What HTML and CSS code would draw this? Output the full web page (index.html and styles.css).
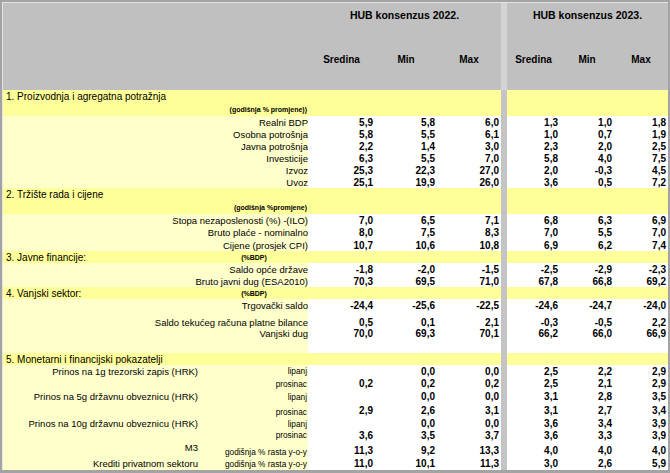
FILE: index.html
```html
<!DOCTYPE html>
<html lang="hr">
<head>
<meta charset="utf-8">
<title>HUB konsenzus</title>
<link rel="stylesheet" href="styles.css">
</head>
<body>
<div class="frame">
<div class="inner">
<table class="sheet">
<colgroup>
<col class="cA"><col class="cB"><col class="c1"><col class="c2"><col class="c3"><col class="cS"><col class="d1"><col class="d2"><col class="d3">
</colgroup>
<tr class="h24">
  <td class="hd" colspan="2"></td>
  <td class="hd htitle" colspan="3">HUB konsenzus 2022.</td>
  <td class="sepH"></td>
  <td class="hd htitle" colspan="3">HUB konsenzus 2023.</td>
</tr>
<tr class="h63">
  <td class="hd" colspan="2"></td>
  <td class="hd hcol">Sredina</td><td class="hd hcol">Min</td><td class="hd hcol">Max</td>
  <td class="sepH"></td>
  <td class="hd hcol">Sredina</td><td class="hd hcol">Min</td><td class="hd hcol">Max</td>
</tr>

<!-- 1 -->
<tr class="h13">
  <td class="sec title" colspan="2">1. Proizvodnja i agregatna potražnja</td>
  <td class="sec"></td><td class="sec"></td><td class="sec"></td><td class="sep"></td><td class="sec"></td><td class="sec"></td><td class="sec"></td>
</tr>
<tr class="h13">
  <td class="sec"></td><td class="sec sm right">(godišnja % promjene))</td>
  <td class="sec"></td><td class="sec"></td><td class="sec"></td><td class="sep"></td><td class="sec"></td><td class="sec"></td><td class="sec"></td>
</tr>
<tr class="h12"><td class="lab" colspan="2">Realni BDP</td><td class="num">5,9</td><td class="num">5,8</td><td class="num">6,0</td><td class="sep"></td><td class="num">1,3</td><td class="num">1,0</td><td class="num">1,8</td></tr>
<tr class="h12"><td class="lab" colspan="2">Osobna potrošnja</td><td class="num">5,8</td><td class="num">5,5</td><td class="num">6,1</td><td class="sep"></td><td class="num">1,0</td><td class="num">0,7</td><td class="num">1,9</td></tr>
<tr class="h12"><td class="lab" colspan="2">Javna potrošnja</td><td class="num">2,2</td><td class="num">1,4</td><td class="num">3,0</td><td class="sep"></td><td class="num">2,3</td><td class="num">2,0</td><td class="num">2,5</td></tr>
<tr class="h12"><td class="lab" colspan="2">Investicije</td><td class="num">6,3</td><td class="num">5,5</td><td class="num">7,0</td><td class="sep"></td><td class="num">5,8</td><td class="num">4,0</td><td class="num">7,5</td></tr>
<tr class="h12"><td class="lab" colspan="2">Izvoz</td><td class="num">25,3</td><td class="num">22,3</td><td class="num">27,0</td><td class="sep"></td><td class="num">2,0</td><td class="num">-0,3</td><td class="num">4,5</td></tr>
<tr class="h12"><td class="lab" colspan="2">Uvoz</td><td class="num">25,1</td><td class="num">19,9</td><td class="num">26,0</td><td class="sep"></td><td class="num">3,6</td><td class="num">0,5</td><td class="num">7,2</td></tr>

<!-- 2 -->
<tr class="h13">
  <td class="sec title" colspan="2">2. Tržište rada i cijene</td>
  <td class="sec"></td><td class="sec"></td><td class="sec"></td><td class="sep"></td><td class="sec"></td><td class="sec"></td><td class="sec"></td>
</tr>
<tr class="h13">
  <td class="sec"></td><td class="sec sm right">(godišnja %promjene)</td>
  <td class="sec"></td><td class="sec"></td><td class="sec"></td><td class="sep"></td><td class="sec"></td><td class="sec"></td><td class="sec"></td>
</tr>
<tr class="h12"><td class="lab" colspan="2">Stopa nezaposlenosti (%) -(ILO)</td><td class="num">7,0</td><td class="num">6,5</td><td class="num">7,1</td><td class="sep"></td><td class="num">6,8</td><td class="num">6,3</td><td class="num">6,9</td></tr>
<tr class="h13"><td class="lab" colspan="2">Bruto plaće - nominalno</td><td class="num">8,0</td><td class="num">7,5</td><td class="num">8,3</td><td class="sep"></td><td class="num">7,0</td><td class="num">5,5</td><td class="num">7,0</td></tr>
<tr class="h12"><td class="lab" colspan="2">Cijene (prosjek CPI)</td><td class="num">10,7</td><td class="num">10,6</td><td class="num">10,8</td><td class="sep"></td><td class="num">6,9</td><td class="num">6,2</td><td class="num">7,4</td></tr>

<!-- 3 -->
<tr class="h12">
  <td class="sec title">3. Javne financije:</td><td class="sec sm center">(%BDP)</td>
  <td class="sec"></td><td class="sec"></td><td class="sec"></td><td class="sep"></td><td class="sec"></td><td class="sec"></td><td class="sec"></td>
</tr>
<tr class="h12"><td class="lab" colspan="2">Saldo opće države</td><td class="num">-1,8</td><td class="num">-2,0</td><td class="num">-1,5</td><td class="sep"></td><td class="num">-2,5</td><td class="num">-2,9</td><td class="num">-2,3</td></tr>
<tr class="h12"><td class="lab" colspan="2">Bruto javni dug (ESA2010)</td><td class="num">70,3</td><td class="num">69,5</td><td class="num">71,0</td><td class="sep"></td><td class="num">67,8</td><td class="num">66,8</td><td class="num">69,2</td></tr>

<!-- 4 -->
<tr class="h12">
  <td class="sec title">4. Vanjski sektor:</td><td class="sec sm center">(%BDP)</td>
  <td class="sec"></td><td class="sec"></td><td class="sec"></td><td class="sep"></td><td class="sec"></td><td class="sec"></td><td class="sec"></td>
</tr>
<tr class="h12"><td class="lab" colspan="2">Trgovački saldo</td><td class="num">-24,4</td><td class="num">-25,6</td><td class="num">-22,5</td><td class="sep"></td><td class="num">-24,6</td><td class="num">-24,7</td><td class="num">-24,0</td></tr>
<tr class="h17 vb"><td class="lab" colspan="2">Saldo tekućeg računa platne bilance</td><td class="num">0,5</td><td class="num">0,1</td><td class="num">2,1</td><td class="sep"></td><td class="num">-0,3</td><td class="num">-0,5</td><td class="num">2,2</td></tr>
<tr class="h11"><td class="lab" colspan="2">Vanjski dug</td><td class="num">70,0</td><td class="num">69,3</td><td class="num">70,1</td><td class="sep"></td><td class="num">66,2</td><td class="num">66,0</td><td class="num">66,9</td></tr>
<tr class="h14"><td class="lab" colspan="2"></td><td class="num"></td><td class="num"></td><td class="num"></td><td class="sep"></td><td class="num"></td><td class="num"></td><td class="num"></td></tr>

<!-- 5 -->
<tr class="h12">
  <td class="sec title" colspan="2">5. Monetarni i financijski pokazatelji</td>
  <td class="sec"></td><td class="sec"></td><td class="sec"></td><td class="sep"></td><td class="sec"></td><td class="sec"></td><td class="sec"></td>
</tr>
<tr class="h12"><td class="lab rpad">Prinos na 1g trezorski zapis (HRK)</td><td class="lab tiny right">lipanj</td><td class="num"></td><td class="num">0,0</td><td class="num">0,0</td><td class="sep"></td><td class="num">2,5</td><td class="num">2,2</td><td class="num">2,9</td></tr>
<tr class="h12"><td class="lab rpad"></td><td class="lab tiny right vbot">prosinac</td><td class="num">0,2</td><td class="num">0,2</td><td class="num">0,2</td><td class="sep"></td><td class="num">2,5</td><td class="num">2,1</td><td class="num">2,9</td></tr>
<tr class="h15"><td class="lab rpad">Prinos na 5g državnu obveznicu (HRK)</td><td class="lab tiny right">lipanj</td><td class="num"></td><td class="num">0,0</td><td class="num">0,0</td><td class="sep"></td><td class="num">3,1</td><td class="num">2,8</td><td class="num">3,5</td></tr>
<tr class="h13"><td class="lab rpad"></td><td class="lab tiny right vbot">prosinac</td><td class="num">2,9</td><td class="num">2,6</td><td class="num">3,1</td><td class="sep"></td><td class="num">3,1</td><td class="num">2,7</td><td class="num">3,4</td></tr>
<tr class="h12"><td class="lab rpad">Prinos na 10g državnu obveznicu (HRK)</td><td class="lab tiny right vbot">lipanj</td><td class="num"></td><td class="num">0,0</td><td class="num">0,0</td><td class="sep"></td><td class="num">3,6</td><td class="num">3,4</td><td class="num">3,9</td></tr>
<tr class="h12"><td class="lab rpad"></td><td class="lab tiny right">prosinac</td><td class="num">3,6</td><td class="num">3,5</td><td class="num">3,7</td><td class="sep"></td><td class="num">3,6</td><td class="num">3,3</td><td class="num">3,9</td></tr>
<tr class="h16"><td class="lab rpad vtop">M3</td><td class="lab tiny right vbot">godišnja % rasta y-o-y</td><td class="num vlow">11,3</td><td class="num vlow">9,2</td><td class="num vlow">13,3</td><td class="sep"></td><td class="num vlow">4,0</td><td class="num vlow">4,0</td><td class="num vlow">4,0</td></tr>
<tr class="h13"><td class="lab rpad">Krediti privatnom sektoru</td><td class="lab tiny right">godišnja % rasta y-o-y</td><td class="num">11,0</td><td class="num">10,1</td><td class="num">11,3</td><td class="sep"></td><td class="num">3,0</td><td class="num">2,6</td><td class="num">5,9</td></tr>
</table>
</div>
</div>
</body>
</html>
```
FILE: styles.css
```css
html, body {
  margin: 0;
  padding: 0;
  background: #ffffff;
}

.frame {
  width: 670px;
  height: 473px;
  box-sizing: border-box;
  border-style: solid;
  border-color: #a3a3a3;
  border-width: 2px 2px 3px 2px;
  overflow: hidden;
}

.inner {
  border-top: 1px solid #e4e4e4;
  border-left: 1px solid #e4e4e4;
}

.sheet {
  width: 665px;
  table-layout: fixed;
  border-collapse: collapse;
  border-spacing: 0;
  font-family: "Liberation Sans", Arial, sans-serif;
  color: #000000;
}

.cA { width: 197px; }
.cB { width: 108px; }
.c1 { width: 67px; }
.c2 { width: 62px; }
.c3 { width: 64px; }
.cS { width: 6px; }
.d1 { width: 53px; }
.d2 { width: 54px; }
.d3 { width: 54px; }

.sheet td {
  padding: 0;
  border: 0;
  white-space: nowrap;
  overflow: hidden;
  vertical-align: middle;
  font-size: 9.5px;
  line-height: 11px;
}

.h11 { height: 11px; }
.h12 { height: 12px; }
.h13 { height: 13px; }
.h14 { height: 14px; }
.h15 { height: 15px; }
.h16 { height: 16px; }
.h17 { height: 17px; }
.h24 { height: 24px; }
.h63 { height: 63px; }

.vb td { vertical-align: bottom; }
.sheet td.vbot { vertical-align: bottom; }
.sheet td.vtop { vertical-align: top; padding-top: 1px; }
.sheet td.vlow { vertical-align: bottom; padding-bottom: 1px; }

.hd {
  background: #c0c0c0;
}

.sepH {
  background: #d4d4d4;
}

.sep {
  background: #c4c4c4;
}

.sheet td.htitle {
  text-align: center;
  font-weight: bold;
  font-size: 10.5px;
  line-height: 12px;
}

.sheet td.hcol {
  text-align: center;
  font-weight: bold;
  font-size: 10px;
  line-height: 12px;
  vertical-align: bottom;
  padding-bottom: 24px;
}

.sec {
  background: #ffff99;
}

.sheet td.title {
  font-size: 10px;
  padding-left: 3px;
}

.lab {
  background: #ffffcc;
  text-align: right;
  padding-right: 1px;
}

.sheet td.rpad {
  padding-right: 2px;
}

.num {
  background: #ffffff;
  text-align: right;
  font-weight: bold;
}

.sheet td.num {
  font-size: 10px;
  padding-right: 2px;
}

.sheet td.sm {
  font-size: 7px;
  font-weight: bold;
}

.sheet td.tiny {
  font-size: 8.3px;
  line-height: 10px;
}

.right {
  text-align: right;
}

.sheet td.right {
  padding-right: 1px;
}

.center {
  text-align: center;
}
```
